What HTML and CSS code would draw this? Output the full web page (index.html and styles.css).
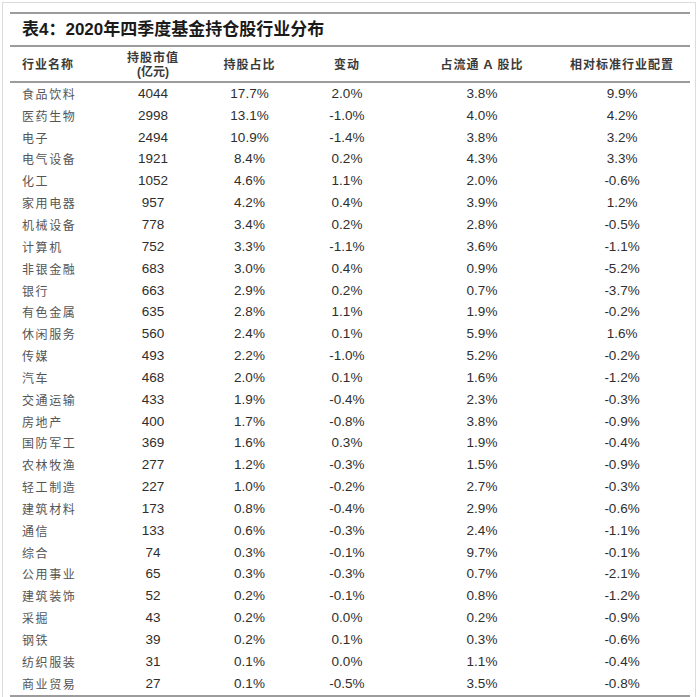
FILE: index.html
```html
<!DOCTYPE html>
<html lang="zh-CN">
<head>
<meta charset="utf-8">
<title>表4：2020年四季度基金持仓股行业分布</title>
<link rel="stylesheet" href="styles.css">
</head>
<body>
<div class="frame">
  <table class="tbl">
    <colgroup>
      <col class="c1"><col class="c2"><col class="c3"><col class="c4"><col class="c5"><col class="c6">
    </colgroup>
    <thead>
      <tr class="title-row"><th colspan="6" class="title">表4：2020年四季度基金持仓股行业分布</th></tr>
      <tr class="head-row">
        <th class="name">行业名称</th>
        <th>持股市值<br><span class="unit">(亿元)</span></th>
        <th>持股占比</th>
        <th>变动</th>
        <th>占流通 <span class="latin">A</span> 股比</th>
        <th class="last">相对标准行业配置</th>
      </tr>
    </thead>
    <tbody>
      <tr><td class="name">食品饮料</td><td>4044</td><td>17.7%</td><td>2.0%</td><td>3.8%</td><td class="last">9.9%</td></tr>
      <tr><td class="name">医药生物</td><td>2998</td><td>13.1%</td><td>-1.0%</td><td>4.0%</td><td class="last">4.2%</td></tr>
      <tr><td class="name">电子</td><td>2494</td><td>10.9%</td><td>-1.4%</td><td>3.8%</td><td class="last">3.2%</td></tr>
      <tr><td class="name">电气设备</td><td>1921</td><td>8.4%</td><td>0.2%</td><td>4.3%</td><td class="last">3.3%</td></tr>
      <tr><td class="name">化工</td><td>1052</td><td>4.6%</td><td>1.1%</td><td>2.0%</td><td class="last">-0.6%</td></tr>
      <tr><td class="name">家用电器</td><td>957</td><td>4.2%</td><td>0.4%</td><td>3.9%</td><td class="last">1.2%</td></tr>
      <tr><td class="name">机械设备</td><td>778</td><td>3.4%</td><td>0.2%</td><td>2.8%</td><td class="last">-0.5%</td></tr>
      <tr><td class="name">计算机</td><td>752</td><td>3.3%</td><td>-1.1%</td><td>3.6%</td><td class="last">-1.1%</td></tr>
      <tr><td class="name">非银金融</td><td>683</td><td>3.0%</td><td>0.4%</td><td>0.9%</td><td class="last">-5.2%</td></tr>
      <tr><td class="name">银行</td><td>663</td><td>2.9%</td><td>0.2%</td><td>0.7%</td><td class="last">-3.7%</td></tr>
      <tr><td class="name">有色金属</td><td>635</td><td>2.8%</td><td>1.1%</td><td>1.9%</td><td class="last">-0.2%</td></tr>
      <tr><td class="name">休闲服务</td><td>560</td><td>2.4%</td><td>0.1%</td><td>5.9%</td><td class="last">1.6%</td></tr>
      <tr><td class="name">传媒</td><td>493</td><td>2.2%</td><td>-1.0%</td><td>5.2%</td><td class="last">-0.2%</td></tr>
      <tr><td class="name">汽车</td><td>468</td><td>2.0%</td><td>0.1%</td><td>1.6%</td><td class="last">-1.2%</td></tr>
      <tr><td class="name">交通运输</td><td>433</td><td>1.9%</td><td>-0.4%</td><td>2.3%</td><td class="last">-0.3%</td></tr>
      <tr><td class="name">房地产</td><td>400</td><td>1.7%</td><td>-0.8%</td><td>3.8%</td><td class="last">-0.9%</td></tr>
      <tr><td class="name">国防军工</td><td>369</td><td>1.6%</td><td>0.3%</td><td>1.9%</td><td class="last">-0.4%</td></tr>
      <tr><td class="name">农林牧渔</td><td>277</td><td>1.2%</td><td>-0.3%</td><td>1.5%</td><td class="last">-0.9%</td></tr>
      <tr><td class="name">轻工制造</td><td>227</td><td>1.0%</td><td>-0.2%</td><td>2.7%</td><td class="last">-0.3%</td></tr>
      <tr><td class="name">建筑材料</td><td>173</td><td>0.8%</td><td>-0.4%</td><td>2.9%</td><td class="last">-0.6%</td></tr>
      <tr><td class="name">通信</td><td>133</td><td>0.6%</td><td>-0.3%</td><td>2.4%</td><td class="last">-1.1%</td></tr>
      <tr><td class="name">综合</td><td>74</td><td>0.3%</td><td>-0.1%</td><td>9.7%</td><td class="last">-0.1%</td></tr>
      <tr><td class="name">公用事业</td><td>65</td><td>0.3%</td><td>-0.3%</td><td>0.7%</td><td class="last">-2.1%</td></tr>
      <tr><td class="name">建筑装饰</td><td>52</td><td>0.2%</td><td>-0.1%</td><td>0.8%</td><td class="last">-1.2%</td></tr>
      <tr><td class="name">采掘</td><td>43</td><td>0.2%</td><td>0.0%</td><td>0.2%</td><td class="last">-0.9%</td></tr>
      <tr><td class="name">钢铁</td><td>39</td><td>0.2%</td><td>0.1%</td><td>0.3%</td><td class="last">-0.6%</td></tr>
      <tr><td class="name">纺织服装</td><td>31</td><td>0.1%</td><td>0.0%</td><td>1.1%</td><td class="last">-0.4%</td></tr>
      <tr><td class="name">商业贸易</td><td>27</td><td>0.1%</td><td>-0.5%</td><td>3.5%</td><td class="last">-0.8%</td></tr>
    </tbody>
  </table>
</div>
</body>
</html>
```

FILE: styles.css
```css
html, body {
  margin: 0;
  padding: 0;
  background: #ffffff;
}

body {
  font-family: "Liberation Sans", "Noto Sans CJK SC", sans-serif;
  color: #333333;
}

.frame {
  box-sizing: border-box;
  margin: 2px 0 0 2px;
  width: 694px;
  height: 720px;
  border-left: 1px solid #dcdcdc;
  border-top: 1px solid #dcdcdc;
  border-right: 1px solid #dcdcdc;
  padding: 9px 0 0 7px;
}

.tbl {
  width: 680px;
  table-layout: fixed;
  border-collapse: collapse;
  border-spacing: 0;
}

.c1 { width: 97px; }
.c2 { width: 92px; }
.c3 { width: 101px; }
.c4 { width: 94px; }
.c5 { width: 176px; }
.c6 { width: 120px; }

.title-row th {
  border-top: 2px solid #9c9c9c;
  border-bottom: 2px solid #9c9c9c;
  height: 31px;
  padding: 0 0 0 12px;
  text-align: left;
  font-family: "Liberation Sans", "Noto Sans CJK SC", sans-serif;
  font-weight: bold;
  font-size: 17px;
  color: #1a1a1a;
  line-height: 31px;
}

.head-row th {
  height: 34px;
  padding: 0;
  border-bottom: 2px solid #9c9c9c;
  font-family: "Noto Sans CJK SC", sans-serif;
  font-weight: bold;
  font-size: 12px;
  line-height: 14px;
  letter-spacing: 1px;
  color: #3a3a3a;
  text-align: center;
  vertical-align: middle;
}

.head-row .unit {
  font-family: "Liberation Sans", "Noto Sans CJK SC", sans-serif;
  letter-spacing: 0;
}

.head-row .latin {
  font-family: "Liberation Sans", sans-serif;
  font-size: 13px;
}

.tbl td {
  height: 21.85px;
  padding: 0;
  font-size: 13.5px;
  line-height: 16px;
  color: #2e2e2e;
  text-align: center;
  vertical-align: middle;
  white-space: nowrap;
}

.tbl .name {
  text-align: left;
  padding-left: 12px;
}

.tbl td.name {
  font-family: "Noto Sans CJK SC", sans-serif;
  font-size: 12px;
  letter-spacing: 1.6px;
  color: #555555;
}

.tbl .last {
  padding-right: 16px;
}

.tbl tbody tr:last-child td {
  border-bottom: 2px solid #9c9c9c;
}
```
